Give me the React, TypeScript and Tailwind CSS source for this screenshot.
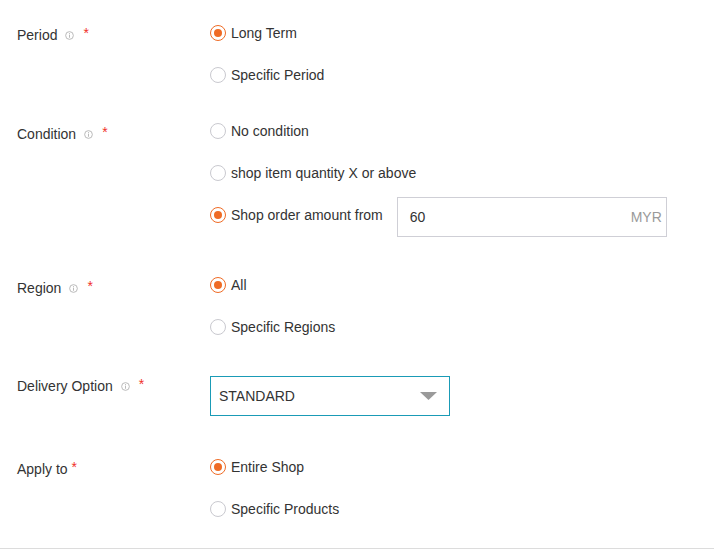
import React from "react";

function Info() {
  return (
    <svg width="9" height="9" viewBox="0 0 10 10" className="ml-[8px] mt-[1px]">
      <circle cx="5" cy="5" r="4.3" fill="none" stroke="#b3b3b3" strokeWidth="1" />
      <rect x="4.5" y="4" width="1" height="3.5" fill="#b3b3b3" />
      <rect x="4.5" y="2.3" width="1" height="1" fill="#b3b3b3" />
    </svg>
  );
}

function Label({ text, info = true, offset }: { text: string; info?: boolean; offset: string }) {
  return (
    <div className={`w-[210px] shrink-0 pl-[17px] ${offset}`}>
      <div className="flex items-center h-[20px] leading-[20px]">
        <span>{text}</span>
        {info ? <Info /> : null}
        <span className={`text-[#f0302a] ${info ? "ml-[9px]" : "ml-[4px]"} self-start leading-[16px]`}>*</span>
      </div>
    </div>
  );
}

function Radio({ checked, label }: { checked?: boolean; label: string }) {
  return (
    <div className="flex items-center h-[20px]">
      <span
        className={`w-[16px] h-[16px] rounded-full border flex items-center justify-center bg-white ${
          checked ? "border-[#ef6b25]" : "border-[#c9c9cf]"
        }`}
      >
        {checked ? <span className="w-[8px] h-[8px] rounded-full bg-[#ef6b25]" /> : null}
      </span>
      <span className="ml-[5px] leading-[20px]">{label}</span>
    </div>
  );
}

function Row({ children }: { children: React.ReactNode }) {
  return <div className="h-[42px] flex items-center">{children}</div>;
}

export default function App() {
  return (
    <div
      className="w-[714px] h-[549px] bg-white text-[14px] text-[#333333] overflow-hidden"
      style={{ fontFamily: '"Liberation Sans", Arial, sans-serif' }}
    >
      <div className="pt-[12px]">
        {/* Period */}
        <div className="flex">
          <Label text="Period" offset="pt-[13px]" />
          <div className="flex flex-col">
            <Row><Radio checked label="Long Term" /></Row>
            <Row><Radio label="Specific Period" /></Row>
          </div>
        </div>

        {/* Condition */}
        <div className="flex mt-[14px]">
          <Label text="Condition" offset="pt-[14px]" />
          <div className="flex flex-col">
            <Row><Radio label="No condition" /></Row>
            <Row><Radio label="shop item quantity X or above" /></Row>
            <div className="flex items-start">
              <div className="mt-[11px]">
                <Radio checked label="Shop order amount from" />
              </div>
              <div className="ml-[14px] mt-[3px] w-[270px] h-[40px] border border-[#cfcfd6] flex items-center justify-between pl-[12px] pr-[4px]">
                <span>60</span>
                <span className="text-[#9a9a9a]">MYR</span>
              </div>
            </div>
          </div>
        </div>

        {/* Region */}
        <div className="flex mt-[27px]">
          <Label text="Region" offset="pt-[14px]" />
          <div className="flex flex-col">
            <Row><Radio checked label="All" /></Row>
            <Row><Radio label="Specific Regions" /></Row>
          </div>
        </div>

        {/* Delivery */}
        <div className="flex mt-[28px]">
          <Label text="Delivery Option" offset="pt-0" />
          <div className="w-[240px] h-[40px] border border-[#1a9bb6] flex items-center justify-between pl-[8px] pr-[12px]">
            <span>STANDARD</span>
            <svg width="17" height="9" viewBox="0 0 17 9">
              <polygon points="0,0 17,0 8.5,8" fill="#9a9a9a" />
            </svg>
          </div>
        </div>

        {/* Apply to */}
        <div className="flex mt-[30px]">
          <Label text="Apply to" info={false} offset="pt-[13px]" />
          <div className="flex flex-col">
            <Row><Radio checked label="Entire Shop" /></Row>
            <Row><Radio label="Specific Products" /></Row>
          </div>
        </div>

        <div className="mt-[18px] border-t border-[#dcdcdc]" />
      </div>
    </div>
  );
}
